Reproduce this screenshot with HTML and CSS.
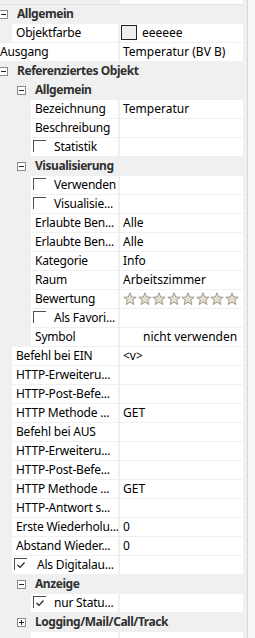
FILE: index.html
```html
<!DOCTYPE html>
<html lang="de">
<head>
    <meta charset="UTF-8">
    <title>Eigenschaften</title>
    <link rel="stylesheet" href="styles.css">
</head>
<body>
<div id="grid">
    <div id="rows">
        <div class="row partial"><div class="name i2 dim"></div><div class="val"></div></div>

        <div class="row cat l1"><span class="tog"><svg width="9" height="9"><rect x="0.5" y="0.5" width="8" height="8" fill="#fff" stroke="#8a8a8a"/><line x1="2" y1="4.5" x2="7" y2="4.5" stroke="#222"/></svg></span>Allgemein</div>
        <div class="row"><div class="name i1">Objektfarbe</div><div class="val"><span class="swatch"></span><span class="swatch-txt">eeeeee</span></div></div>
        <div class="row"><div class="name i0">Ausgang</div><div class="val">Temperatur (BV B)</div></div>

        <div class="row cat l1"><span class="tog"><svg width="9" height="9"><rect x="0.5" y="0.5" width="8" height="8" fill="#fff" stroke="#8a8a8a"/><line x1="2" y1="4.5" x2="7" y2="4.5" stroke="#222"/></svg></span>Referenziertes Objekt</div>
        <div class="row cat l2"><span class="tog"><svg width="9" height="9"><rect x="0.5" y="0.5" width="8" height="8" fill="#fff" stroke="#8a8a8a"/><line x1="2" y1="4.5" x2="7" y2="4.5" stroke="#222"/></svg></span>Allgemein</div>
        <div class="row"><div class="name i2">Bezeichnung</div><div class="val">Temperatur</div></div>
        <div class="row"><div class="name i2">Beschreibung</div><div class="val"></div></div>
        <div class="row"><div class="name i2 chk"><span class="box"></span>Statistik</div><div class="val"></div></div>

        <div class="row cat l2"><span class="tog"><svg width="9" height="9"><rect x="0.5" y="0.5" width="8" height="8" fill="#fff" stroke="#8a8a8a"/><line x1="2" y1="4.5" x2="7" y2="4.5" stroke="#222"/></svg></span>Visualisierung</div>
        <div class="row"><div class="name i2 chk"><span class="box"></span>Verwenden</div><div class="val"></div></div>
        <div class="row"><div class="name i2 chk"><span class="box"></span>Visualisie...</div><div class="val"></div></div>
        <div class="row"><div class="name i2">Erlaubte Ben...</div><div class="val">Alle</div></div>
        <div class="row"><div class="name i2">Erlaubte Ben...</div><div class="val">Alle</div></div>
        <div class="row"><div class="name i2">Kategorie</div><div class="val">Info</div></div>
        <div class="row"><div class="name i2">Raum</div><div class="val">Arbeitszimmer</div></div>
        <div class="row"><div class="name i2">Bewertung</div><div class="val stars">
            <svg width="14" height="14"><polygon points="7,0.8 8.7,5 13.2,5.2 9.7,8 10.9,12.6 7,10.1 3.1,12.6 4.3,8 0.8,5.2 5.3,5" fill="#e4ded2" stroke="#a39a8a"/></svg>
            <svg width="14" height="14"><polygon points="7,0.8 8.7,5 13.2,5.2 9.7,8 10.9,12.6 7,10.1 3.1,12.6 4.3,8 0.8,5.2 5.3,5" fill="#e4ded2" stroke="#a39a8a"/></svg>
            <svg width="14" height="14"><polygon points="7,0.8 8.7,5 13.2,5.2 9.7,8 10.9,12.6 7,10.1 3.1,12.6 4.3,8 0.8,5.2 5.3,5" fill="#e4ded2" stroke="#a39a8a"/></svg>
            <svg width="14" height="14"><polygon points="7,0.8 8.7,5 13.2,5.2 9.7,8 10.9,12.6 7,10.1 3.1,12.6 4.3,8 0.8,5.2 5.3,5" fill="#e4ded2" stroke="#a39a8a"/></svg>
            <svg width="14" height="14"><polygon points="7,0.8 8.7,5 13.2,5.2 9.7,8 10.9,12.6 7,10.1 3.1,12.6 4.3,8 0.8,5.2 5.3,5" fill="#e4ded2" stroke="#a39a8a"/></svg>
            <svg width="14" height="14"><polygon points="7,0.8 8.7,5 13.2,5.2 9.7,8 10.9,12.6 7,10.1 3.1,12.6 4.3,8 0.8,5.2 5.3,5" fill="#e4ded2" stroke="#a39a8a"/></svg>
            <svg width="14" height="14"><polygon points="7,0.8 8.7,5 13.2,5.2 9.7,8 10.9,12.6 7,10.1 3.1,12.6 4.3,8 0.8,5.2 5.3,5" fill="#e4ded2" stroke="#a39a8a"/></svg>
            <svg width="14" height="14"><polygon points="7,0.8 8.7,5 13.2,5.2 9.7,8 10.9,12.6 7,10.1 3.1,12.6 4.3,8 0.8,5.2 5.3,5" fill="#e4ded2" stroke="#a39a8a"/></svg>
        </div></div>
        <div class="row"><div class="name i2 chk"><span class="box"></span>Als Favori...</div><div class="val"></div></div>
        <div class="row"><div class="name i2">Symbol</div><div class="val centered">nicht verwenden</div></div>

        <div class="row"><div class="name i1">Befehl bei EIN</div><div class="val">&lt;v&gt;</div></div>
        <div class="row"><div class="name i1">HTTP-Erweiteru...</div><div class="val"></div></div>
        <div class="row"><div class="name i1">HTTP-Post-Befe...</div><div class="val"></div></div>
        <div class="row"><div class="name i1">HTTP Methode ...</div><div class="val">GET</div></div>
        <div class="row"><div class="name i1">Befehl bei AUS</div><div class="val"></div></div>
        <div class="row"><div class="name i1">HTTP-Erweiteru...</div><div class="val"></div></div>
        <div class="row"><div class="name i1">HTTP-Post-Befe...</div><div class="val"></div></div>
        <div class="row"><div class="name i1">HTTP Methode ...</div><div class="val">GET</div></div>
        <div class="row"><div class="name i1">HTTP-Antwort s...</div><div class="val"></div></div>
        <div class="row"><div class="name i1">Erste Wiederholu...</div><div class="val">0</div></div>
        <div class="row"><div class="name i1">Abstand Wieder...</div><div class="val">0</div></div>
        <div class="row"><div class="name i1 chk"><span class="box on"><svg width="12" height="12"><polyline points="2.5,6 5,8.5 9.5,3.5" fill="none" stroke="#222" stroke-width="1.2"/></svg></span>Als Digitalau...</div><div class="val"></div></div>

        <div class="row cat l2"><span class="tog"><svg width="9" height="9"><rect x="0.5" y="0.5" width="8" height="8" fill="#fff" stroke="#8a8a8a"/><line x1="2" y1="4.5" x2="7" y2="4.5" stroke="#222"/></svg></span>Anzeige</div>
        <div class="row"><div class="name i2 chk"><span class="box on"><svg width="12" height="12"><polyline points="2.5,6 5,8.5 9.5,3.5" fill="none" stroke="#222" stroke-width="1.2"/></svg></span>nur Statu...</div><div class="val"></div></div>

        <div class="row cat l2"><span class="tog"><svg width="9" height="9"><rect x="0.5" y="0.5" width="8" height="8" fill="#fff" stroke="#8a8a8a"/><line x1="2" y1="4.5" x2="7" y2="4.5" stroke="#222"/><line x1="4.5" y1="2" x2="4.5" y2="7" stroke="#222"/></svg></span>Logging/Mail/Call/Track</div>
        <div class="row"><div class="name i2"></div><div class="val"></div></div>
    </div>
    <div id="scroll"><div class="track"></div></div>
</div>
</body>
</html>
```

FILE: styles.css
```css
*{margin: 0;padding: 0;box-sizing: border-box;}
html,body{background: #f0f0f0;}
body{font-family: "Segoe UI", "Noto Sans", sans-serif;font-size: 12px;color: #000;overflow: hidden;}

#grid{display: flex;width: 255px;height: 638px;overflow: hidden;}
#rows{width: 243px;flex: 0 0 243px;}
#scroll{flex: 1;display: flex;}
#scroll .track{margin-left: 4px;width: 8px;border-left: 1px solid #d6d6d6;background: #f7f7f7;}

.row{display: flex;height: 18px;margin-bottom: 1px;line-height: 18px;white-space: nowrap;}
.row.partial{margin-top: -13px;height: 18px;border-bottom: 1px solid #e2e2e2;margin-bottom: 0;}

/*左边的名称列*/
.name{background: #fff;overflow: hidden;flex: 0 0 auto;letter-spacing: -0.2px;}
.name.i0{margin-left: 0;width: 118px;padding-left: 0;}
.name.i1{margin-left: 12px;width: 106px;padding-left: 4px;}
.name.i2{margin-left: 31px;width: 87px;padding-left: 4px;}
.name.dim{background: transparent;}

/*右边的值列*/
.val{background: #fff;flex: 1;margin-left: 2px;padding-left: 3px;overflow: hidden;}
.val.centered{padding-left: 23px;}

/*分组标题*/
.cat{font-weight: bold;color: #303030;align-items: center;margin-bottom: 1px;letter-spacing: -0.45px;}
.cat .tog{display: flex;width: 9px;height: 9px;margin-right: 9px;}
.cat.l1{padding-left: 0;}
.cat.l1 .tog{margin-left: -1px;}
.cat.l2{padding-left: 17px;}

/*复选框*/
.chk{display: flex;align-items: flex-start;}
.chk .box{display: block;width: 13px;height: 12px;margin: 2px 8px 0 -2px;border-top: 1px solid #505050;border-left: 1px solid #505050;}
.chk .box svg{display: block;}
.name.i1.chk .box{margin-left: -2px;margin-right: 10px;}

.swatch{display: inline-block;width: 16px;height: 15px;border: 1px solid #222;background: #eee;vertical-align: top;margin: 1px 0 0 -2px;}
.swatch-txt{margin-left: 5px;}

.stars{display: flex;align-items: center;padding-left: 3px;}
.stars svg{flex: 0 0 14px;margin-right: 0.5px;}
```
